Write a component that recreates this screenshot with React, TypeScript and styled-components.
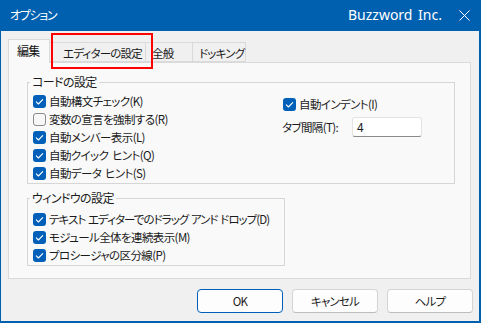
import React from "react";
import styled, { createGlobalStyle } from "styled-components";

const GlobalStyle = createGlobalStyle`
  html, body { margin: 0; padding: 0; }
  body {
    font-family: "Noto Sans CJK JP", "Noto Sans", sans-serif;
    font-size: 11.5px;
    color: #1b1b1b;
    font-feature-settings: "palt" 1;
    letter-spacing: -0.6px;
    word-spacing: 2px;
  }
  * { box-sizing: border-box; }
`;

const BLUE = "#0060b0";
const ACCENT = "#005fb8";

const Window = styled.div`
  position: relative;
  width: 481px;
  height: 323px;
  background: ${BLUE};
  display: flex;
  flex-direction: column;
  overflow: hidden;
`;

const TitleBar = styled.div`
  height: 31px;
  flex: none;
  display: flex;
  align-items: center;
  padding: 0 11px 0 10px;
  color: #ffffff;
`;

const Title = styled.div`
  font-size: 12px;
  line-height: 16px;
  letter-spacing: -1.3px;
  margin-top: -1px;
`;

const Spacer = styled.div`
  flex: 1;
`;

const Brand = styled.div`
  font-family: "Noto Sans", "Open Sans", sans-serif;
  font-size: 14px;
  line-height: 18px;
  letter-spacing: 0;
  margin-right: 17px;
  margin-top: -1px;
`;

const CloseIcon = styled.svg`
  display: block;
  width: 11px;
  height: 11px;
  margin-top: -1px;
`;

const Client = styled.div`
  flex: 1;
  margin: 0 2px 2px 1px;
  background: #f0f0f0;
  padding: 8px 6px 8px 7px;
  display: flex;
  flex-direction: column;
`;

const TabStrip = styled.div`
  height: 23px;
  display: flex;
  align-items: flex-end;
  position: relative;
  z-index: 1;
`;

const Tab = styled.div<{ $active?: boolean; $w: number; $pl: number }>`
  width: ${(p) => p.$w}px;
  padding-left: ${(p) => p.$pl}px;
  height: ${(p) => (p.$active ? 24 : 20)}px;
  margin-bottom: ${(p) => (p.$active ? -1 : 0)}px;
  line-height: ${(p) => (p.$active ? 21 : 20)}px;
  background: ${(p) => (p.$active ? "#f9f9f9" : "#f0f0f0")};
  border: 1px solid #dadada;
  border-bottom: ${(p) => (p.$active ? "none" : "1px solid #dadada")};
  border-left-width: ${(p) => (p.$active ? 1 : 0)}px;
  white-space: nowrap;
  font-size: ${(p) => (p.$active ? 12 : 11.5)}px;
  letter-spacing: -0.8px;
  color: ${(p) => (p.$active ? "#111" : "#1b1b1b")};
`;

const Panel = styled.div`
  height: 217px;
  margin-right: 2px;
  background: #f9f9f9;
  border: 1px solid #dadada;
  padding: 12px 16px 0 18px;
  display: flex;
  flex-direction: column;
  align-items: flex-start;
`;

const Group = styled.fieldset<{ $w: number; $pt: number; $mt?: number }>`
  width: ${(p) => p.$w}px;
  margin: ${(p) => p.$mt ?? 0}px 0 0 0;
  padding: ${(p) => p.$pt}px 0 1px 5px;
  border: 1px solid #d6d6d6;
  min-width: 0;
`;

const Legend = styled.legend`
  padding: 0 2px;
  margin-left: -3px;
  line-height: 14px;
  font-size: 12px;
`;

const GroupBody = styled.div`
  display: flex;
  align-items: flex-start;
`;

const Column = styled.div<{ $w?: number; $mt?: number }>`
  display: flex;
  flex-direction: column;
  width: ${(p) => (p.$w ? `${p.$w}px` : "auto")};
  margin-top: ${(p) => p.$mt ?? 0}px;
`;

const Row = styled.label<{ $tight?: boolean }>`
  height: 18px;
  display: flex;
  align-items: center;
  gap: 3px;
  white-space: nowrap;
  line-height: 18px;
  letter-spacing: ${(p) => (p.$tight ? -0.95 : -0.6)}px;
  word-spacing: ${(p) => (p.$tight ? 1 : 2)}px;
`;

const FieldRow = styled.div`
  display: flex;
  align-items: center;
  margin-top: 4px;
  margin-left: -1px;
`;

const FieldLabel = styled.span`
  width: 70px;
  white-space: nowrap;
`;

const TextBox = styled.div`
  width: 70px;
  height: 20px;
  background: #ffffff;
  border: 1px solid #e3e3e3;
  border-bottom: 1px solid #8a8a8a;
  border-radius: 3px;
  padding-left: 4px;
  line-height: 18px;
  font-size: 12px;
`;

const BoxSvg = styled.svg`
  display: block;
  flex: none;
  width: 13px;
  height: 13px;
`;

const ButtonRow = styled.div`
  margin-top: 10px;
  height: 24px;
  display: flex;
  justify-content: flex-end;
  gap: 9px;
`;

const Button = styled.div<{ $default?: boolean }>`
  width: 86px;
  height: 24px;
  border-radius: 4px;
  background: #fdfdfd;
  border: 1px solid ${(p) => (p.$default ? ACCENT : "#d4d4d4")};
  border-bottom-color: ${(p) => (p.$default ? ACCENT : "#bcbcbc")};
  display: flex;
  align-items: center;
  justify-content: center;
  font-size: 11.5px;
  letter-spacing: -0.8px;
  line-height: 16px;
`;

const Highlight = styled.div`
  position: absolute;
  left: 51px;
  top: 33px;
  width: 102px;
  height: 36px;
  border: 2px solid #ff0000;
  pointer-events: none;
  z-index: 5;
`;

function CheckBox({ checked }: { checked: boolean }) {
  return (
    <BoxSvg viewBox="0 0 13 13">
      {checked ? (
        <>
          <rect x="0" y="0" width="13" height="13" rx="3" fill={ACCENT} />
          <path
            d="M3.3 6.9 L5.4 9 L9.7 4.6"
            fill="none"
            stroke="#ffffff"
            strokeWidth="1.1"
            strokeLinecap="round"
            strokeLinejoin="round"
          />
        </>
      ) : (
        <rect x="0.5" y="0.5" width="12" height="12" rx="2.5" fill="#f7f7f7" stroke="#8a8a8a" />
      )}
    </BoxSvg>
  );
}

function Check({
  checked = true,
  tight,
  children,
}: {
  checked?: boolean;
  tight?: boolean;
  children: React.ReactNode;
}) {
  return (
    <Row $tight={tight}>
      <CheckBox checked={checked} />
      <span>{children}</span>
    </Row>
  );
}

export default function App() {
  return (
    <>
      <GlobalStyle />
      <Window>
        <TitleBar>
          <Title>オプション</Title>
          <Spacer />
          <Brand>Buzzword Inc.</Brand>
          <CloseIcon viewBox="0 0 11 11">
            <path d="M0.5 0.5 L10.5 10.5 M10.5 0.5 L0.5 10.5" stroke="#ffffff" strokeWidth="1" />
          </CloseIcon>
        </TitleBar>
        <Client>
          <TabStrip>
            <Tab $active $w={42} $pl={8}>編集</Tab>
            <Tab $w={96} $pl={13}>エディターの設定</Tab>
            <Tab $w={47} $pl={6}>全般</Tab>
            <Tab $w={53} $pl={6}>ドッキング</Tab>
          </TabStrip>
          <Panel>
            <Group $w={428} $pt={3}>
              <Legend>コードの設定</Legend>
              <GroupBody>
                <Column $w={250}>
                  <Check>自動構文チェック(K)</Check>
                  <Check checked={false}>変数の宣言を強制する(R)</Check>
                  <Check>自動メンバー表示(L)</Check>
                  <Check>自動クイック ヒント(Q)</Check>
                  <Check>自動データ ヒント(S)</Check>
                </Column>
                <Column $mt={3}>
                  <Check>自動インデント(I)</Check>
                  <FieldRow>
                    <FieldLabel>タブ間隔(T):</FieldLabel>
                    <TextBox>4</TextBox>
                  </FieldRow>
                </Column>
              </GroupBody>
            </Group>
            <Group $w={258} $pt={5} $mt={7}>
              <Legend>ウィンドウの設定</Legend>
              <Column>
                <Check tight>テキスト エディターでのドラッグ アンド ドロップ(D)</Check>
                <Check>モジュール全体を連続表示(M)</Check>
                <Check>プロシージャの区分線(P)</Check>
              </Column>
            </Group>
          </Panel>
          <ButtonRow>
            <Button $default>OK</Button>
            <Button>キャンセル</Button>
            <Button>ヘルプ</Button>
          </ButtonRow>
        </Client>
        <Highlight />
      </Window>
    </>
  );
}
